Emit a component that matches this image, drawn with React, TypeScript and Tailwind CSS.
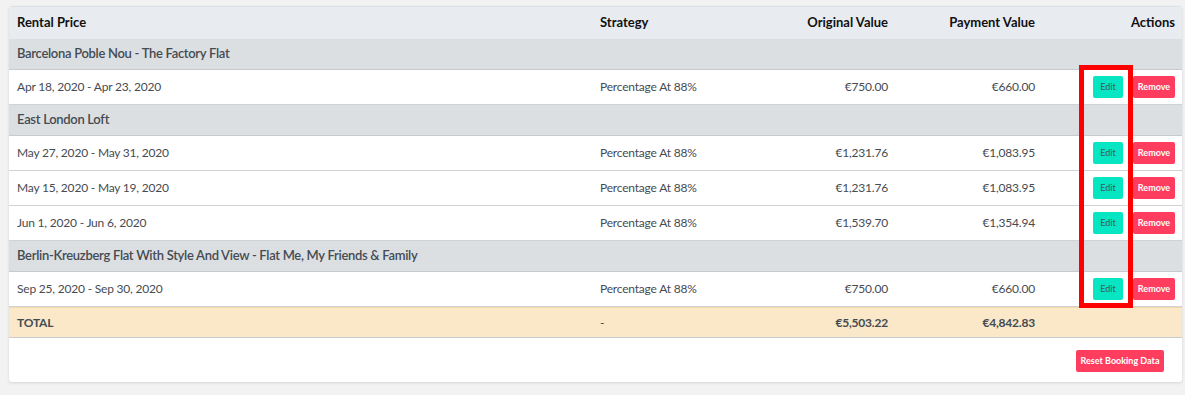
import React from "react";

type Row =
  | { kind: "group"; title: string }
  | { kind: "data"; dates: string; strategy: string; original: string; payment: string };

const rows: Row[] = [
  { kind: "group", title: "Barcelona Poble Nou - The Factory Flat" },
  { kind: "data", dates: "Apr 18, 2020 - Apr 23, 2020", strategy: "Percentage At 88%", original: "€750.00", payment: "€660.00" },
  { kind: "group", title: "East London Loft" },
  { kind: "data", dates: "May 27, 2020 - May 31, 2020", strategy: "Percentage At 88%", original: "€1,231.76", payment: "€1,083.95" },
  { kind: "data", dates: "May 15, 2020 - May 19, 2020", strategy: "Percentage At 88%", original: "€1,231.76", payment: "€1,083.95" },
  { kind: "data", dates: "Jun 1, 2020 - Jun 6, 2020", strategy: "Percentage At 88%", original: "€1,539.70", payment: "€1,354.94" },
  { kind: "group", title: "Berlin-Kreuzberg Flat With Style And View - Flat Me, My Friends & Family" },
  { kind: "data", dates: "Sep 25, 2020 - Sep 30, 2020", strategy: "Percentage At 88%", original: "€750.00", payment: "€660.00" },
];

const cols = "grid grid-cols-[583px_148px_156px_147px_139px]";

export default function App() {
  return (
    <div
      className="relative w-[1185px] h-[395px] bg-[#f2f2f2] pt-[6px] pl-[9px] text-[13px]"
      style={{ fontFamily: "Lato, 'Open Sans', sans-serif" }}
    >
      <div className="w-[1173px] bg-white rounded-[3px] shadow-[0_1px_3px_rgba(0,0,0,0.12)] overflow-hidden">
        {/* header */}
        <div className={`${cols} h-[33px] items-center bg-[#e8ecf0] border-t border-[#dde1e5] font-bold text-[#111]`}>
          <div className="pl-[8px]">Rental Price</div>
          <div className="pl-[8px]">Strategy</div>
          <div className="text-right pr-[8px]">Original Value</div>
          <div className="text-right pr-[8px]">Payment Value</div>
          <div className="text-right pr-[7px]">Actions</div>
        </div>
        {rows.map((r, i) =>
          r.kind === "group" ? (
            <div
              key={i}
              className="h-[31px] flex items-center bg-[#dcdfe2] border-b border-[#c7cbcf] pl-[8px] font-semibold text-[13px] tracking-[-0.3px] text-[#454b52]"
            >
              {r.title}
            </div>
          ) : (
            <div key={i} className={`${cols} h-[35px] items-center border-b border-[#cfd3d7] text-[12px] tracking-[-0.2px] text-[#464b51]`}>
              <div className="pl-[8px]">{r.dates}</div>
              <div className="pl-[8px]">{r.strategy}</div>
              <div className="text-right pr-[8px]">{r.original}</div>
              <div className="text-right pr-[8px]">{r.payment}</div>
              <div className="flex justify-end items-center gap-[10px] pr-[7px] tracking-normal">
                <button className="w-[30px] h-[22px] rounded-[2px] bg-[#06e6c3] text-[9px] text-[#3b5560]">Edit</button>
                <button className="w-[42px] h-[22px] rounded-[2px] bg-[#ff3d5f] text-[9px] font-bold text-white">Remove</button>
              </div>
            </div>
          )
        )}
        {/* total */}
        <div className={`${cols} h-[31px] items-center bg-[#fae8c9] border-t border-[#f3d9a6] border-b border-b-[#c9cccf] font-bold text-[12px] tracking-[-0.2px] text-[#454b52]`}>
          <div className="pl-[8px]">TOTAL</div>
          <div className="pl-[8px] font-normal">-</div>
          <div className="text-right pr-[8px]">€5,503.22</div>
          <div className="text-right pr-[8px]">€4,842.83</div>
          <div />
        </div>
        {/* footer */}
        <div className="h-[44px] flex justify-end items-start pt-[12px] pr-[18px]">
          <button className="w-[88px] h-[22px] rounded-[2px] bg-[#ff3d5f] text-[9px] font-bold text-white">
            Reset Booking Data
          </button>
        </div>
      </div>
      {/* annotation overlay */}
      <div className="absolute left-[1079px] top-[65px] w-[54px] h-[243px] border-[5px] border-[#ff0000]" />
    </div>
  );
}
